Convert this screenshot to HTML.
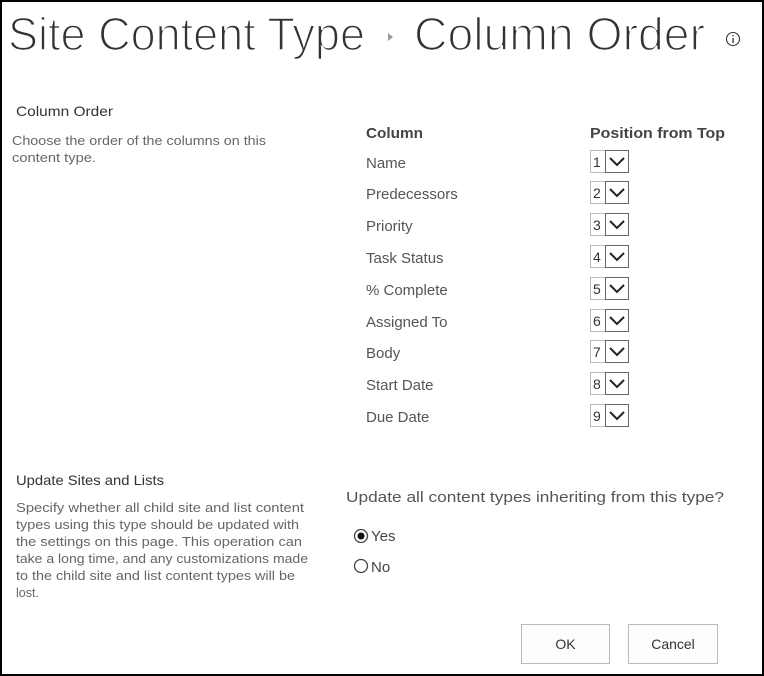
<!DOCTYPE html>
<html><head><meta charset="utf-8"><style>
html,body{margin:0;padding:0;background:#fff}
svg{display:block}
text{font-family:"Liberation Sans",sans-serif}
</style></head><body>
<svg width="764" height="676" viewBox="0 0 764 676" xmlns="http://www.w3.org/2000/svg">
<rect x="1" y="1" width="762" height="674" fill="#fff" stroke="#000" stroke-width="2"/>
<g fill="#333" stroke="#fff" stroke-width="1.6">
<text x="8" y="50" font-size="46" textLength="357" lengthAdjust="spacingAndGlyphs">Site Content Type</text>
<text x="414" y="50" font-size="46" textLength="291" lengthAdjust="spacingAndGlyphs">Column Order</text>
</g>
<path d="M388 33 L393 37 L388 41 Z" fill="#999"/>
<circle cx="733" cy="39" r="6.5" fill="none" stroke="#333" stroke-width="1.1"/>
<rect x="732.4" y="38" width="1.3" height="5" fill="#333"/><rect x="732.4" y="35" width="1.3" height="1.4" fill="#333"/>

<text x="16" y="116" font-size="14" fill="#333" textLength="97" lengthAdjust="spacingAndGlyphs">Column Order</text>
<text x="12" y="145" font-size="13" fill="#666" textLength="254" lengthAdjust="spacingAndGlyphs">Choose the order of the columns on this</text>
<text x="12" y="162" font-size="13" fill="#666" textLength="84" lengthAdjust="spacingAndGlyphs">content type.</text>

<text x="366" y="138" font-size="15" font-weight="bold" fill="#444" textLength="57" lengthAdjust="spacingAndGlyphs">Column</text>
<text x="590" y="138" font-size="15" font-weight="bold" fill="#444" textLength="135" lengthAdjust="spacingAndGlyphs">Position from Top</text>

<g font-size="15" fill="#555">
<text x="366" y="168">Name</text>
<text x="366" y="199">Predecessors</text>
<text x="366" y="231">Priority</text>
<text x="366" y="263">Task Status</text>
<text x="366" y="295">% Complete</text>
<text x="366" y="327">Assigned To</text>
<text x="366" y="358">Body</text>
<text x="366" y="390">Start Date</text>
<text x="366" y="422">Due Date</text>
</g>
<g font-size="14" fill="#333">
<g transform="translate(0,0)"><rect x="590.5" y="150.5" width="38" height="22" fill="#fff" stroke="#bbb"/><rect x="605.5" y="150.5" width="23" height="22" fill="#fff" stroke="#666"/><path d="M610 158 L617 165 L624 158" fill="none" stroke="#222" stroke-width="2"/><text x="593" y="167">1</text></g>
<g transform="translate(0,31)"><rect x="590.5" y="150.5" width="38" height="22" fill="#fff" stroke="#bbb"/><rect x="605.5" y="150.5" width="23" height="22" fill="#fff" stroke="#666"/><path d="M610 158 L617 165 L624 158" fill="none" stroke="#222" stroke-width="2"/><text x="593" y="167">2</text></g>
<g transform="translate(0,63)"><rect x="590.5" y="150.5" width="38" height="22" fill="#fff" stroke="#bbb"/><rect x="605.5" y="150.5" width="23" height="22" fill="#fff" stroke="#666"/><path d="M610 158 L617 165 L624 158" fill="none" stroke="#222" stroke-width="2"/><text x="593" y="167">3</text></g>
<g transform="translate(0,95)"><rect x="590.5" y="150.5" width="38" height="22" fill="#fff" stroke="#bbb"/><rect x="605.5" y="150.5" width="23" height="22" fill="#fff" stroke="#666"/><path d="M610 158 L617 165 L624 158" fill="none" stroke="#222" stroke-width="2"/><text x="593" y="167">4</text></g>
<g transform="translate(0,127)"><rect x="590.5" y="150.5" width="38" height="22" fill="#fff" stroke="#bbb"/><rect x="605.5" y="150.5" width="23" height="22" fill="#fff" stroke="#666"/><path d="M610 158 L617 165 L624 158" fill="none" stroke="#222" stroke-width="2"/><text x="593" y="167">5</text></g>
<g transform="translate(0,159)"><rect x="590.5" y="150.5" width="38" height="22" fill="#fff" stroke="#bbb"/><rect x="605.5" y="150.5" width="23" height="22" fill="#fff" stroke="#666"/><path d="M610 158 L617 165 L624 158" fill="none" stroke="#222" stroke-width="2"/><text x="593" y="167">6</text></g>
<g transform="translate(0,190)"><rect x="590.5" y="150.5" width="38" height="22" fill="#fff" stroke="#bbb"/><rect x="605.5" y="150.5" width="23" height="22" fill="#fff" stroke="#666"/><path d="M610 158 L617 165 L624 158" fill="none" stroke="#222" stroke-width="2"/><text x="593" y="167">7</text></g>
<g transform="translate(0,222)"><rect x="590.5" y="150.5" width="38" height="22" fill="#fff" stroke="#bbb"/><rect x="605.5" y="150.5" width="23" height="22" fill="#fff" stroke="#666"/><path d="M610 158 L617 165 L624 158" fill="none" stroke="#222" stroke-width="2"/><text x="593" y="167">8</text></g>
<g transform="translate(0,254)"><rect x="590.5" y="150.5" width="38" height="22" fill="#fff" stroke="#bbb"/><rect x="605.5" y="150.5" width="23" height="22" fill="#fff" stroke="#666"/><path d="M610 158 L617 165 L624 158" fill="none" stroke="#222" stroke-width="2"/><text x="593" y="167">9</text></g>
</g>

<text x="16" y="485" font-size="14" fill="#333" textLength="148" lengthAdjust="spacingAndGlyphs">Update Sites and Lists</text>
<g font-size="12.5" fill="#666">
<text x="16" y="512" textLength="288" lengthAdjust="spacingAndGlyphs">Specify whether all child site and list content</text>
<text x="16" y="529" textLength="283" lengthAdjust="spacingAndGlyphs">types using this type should be updated with</text>
<text x="16" y="546" textLength="286" lengthAdjust="spacingAndGlyphs">the settings on this page. This operation can</text>
<text x="16" y="563" textLength="292" lengthAdjust="spacingAndGlyphs">take a long time, and any customizations made</text>
<text x="16" y="580" textLength="279" lengthAdjust="spacingAndGlyphs">to the child site and list content types will be</text>
<text x="16" y="597">lost.</text>
</g>
<text x="346" y="502" font-size="15" fill="#555" textLength="378" lengthAdjust="spacingAndGlyphs">Update all content types inheriting from this type?</text>
<circle cx="361" cy="536" r="6.5" fill="#fff" stroke="#444" stroke-width="1.3"/>
<circle cx="361" cy="536" r="3.5" fill="#111"/>
<text x="371" y="541" font-size="15" fill="#444">Yes</text>
<circle cx="361" cy="566" r="6.5" fill="#fff" stroke="#444" stroke-width="1.3"/>
<text x="371" y="572" font-size="15" fill="#444">No</text>

<rect x="521.5" y="624.5" width="88" height="39" fill="#fdfdfd" stroke="#bbb"/>
<text x="565.5" y="649" font-size="14" fill="#333" text-anchor="middle">OK</text>
<rect x="628.5" y="624.5" width="89" height="39" fill="#fdfdfd" stroke="#bbb"/>
<text x="673" y="649" font-size="14" fill="#333" text-anchor="middle">Cancel</text>
</svg>
</body></html>
